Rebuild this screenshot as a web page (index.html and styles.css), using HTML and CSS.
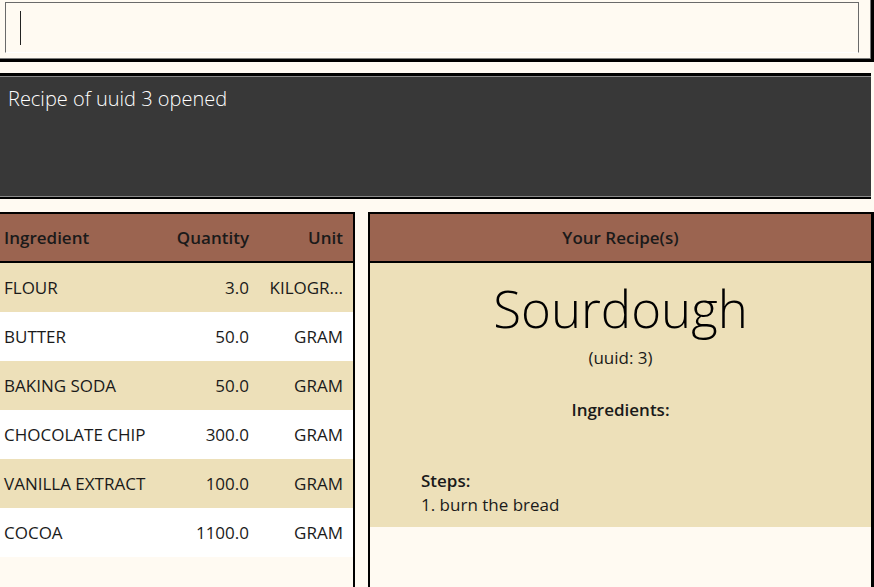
FILE: index.html
```html
<!DOCTYPE html>
<html>
<head>
<meta charset="utf-8">
<link rel="stylesheet" href="styles.css">
</head>
<body>
<div class="app">
  <div class="command-pane">
    <div class="command-field"><span class="caret"></span></div>
  </div>
  <div class="result-pane">
    <div class="result-text">Recipe of uuid 3 opened</div>
  </div>
  <div class="main">
    <div class="ingredient-panel">
      <div class="table-head row">
        <div class="c-name">Ingredient</div>
        <div class="c-qty">Quantity</div>
        <div class="c-unit">Unit</div>
      </div>
      <div class="row odd"><div class="c-name">FLOUR</div><div class="c-qty">3.0</div><div class="c-unit">KILOGR...</div></div>
      <div class="row even"><div class="c-name">BUTTER</div><div class="c-qty">50.0</div><div class="c-unit">GRAM</div></div>
      <div class="row odd"><div class="c-name">BAKING SODA</div><div class="c-qty">50.0</div><div class="c-unit">GRAM</div></div>
      <div class="row even"><div class="c-name">CHOCOLATE CHIP</div><div class="c-qty">300.0</div><div class="c-unit">GRAM</div></div>
      <div class="row odd"><div class="c-name">VANILLA EXTRACT</div><div class="c-qty">100.0</div><div class="c-unit">GRAM</div></div>
      <div class="row even"><div class="c-name">COCOA</div><div class="c-qty">1100.0</div><div class="c-unit">GRAM</div></div>
    </div>
    <div class="recipe-panel">
      <div class="recipe-head">Your Recipe(s)</div>
      <div class="recipe-card">
        <div class="recipe-title">Sourdough</div>
        <div class="recipe-uuid">(uuid: 3)</div>
        <div class="recipe-section">Ingredients:</div>
        <div class="recipe-steps">
          <div class="steps-label">Steps:</div>
          <div class="step">1. burn the bread</div>
        </div>
      </div>
    </div>
  </div>
</div>
</body>
</html>
```

FILE: styles.css
```css
html, body {
  margin: 0;
  padding: 0;
}
body {
  background: #fffaf2;
  font-family: "Open Sans", "Noto Sans", sans-serif;
  color: #1a1a1a;
  width: 874px;
  height: 587px;
  overflow: hidden;
}
.app {
  display: flex;
  flex-direction: column;
  height: 587px;
}
.command-pane {
  box-sizing: border-box;
  height: 62px;
  width: 874px;
  border-right: 3px solid #000;
  border-bottom: 3px solid #000;
  box-shadow: inset -1px -1px 0 #7a7a7a;
  padding: 2px 12px 0 5px;
}
.command-field {
  box-sizing: border-box;
  height: 51px;
  border: 1px solid #6a6a6a;
  border-bottom-color: #ffffff;
  display: flex;
  align-items: flex-start;
  padding: 8px 0 0 14px;
}
.caret {
  width: 1px;
  height: 34px;
  background: #222;
}
.result-pane {
  box-sizing: border-box;
  margin-top: 11px;
  width: 871px;
  height: 126px;
  background: #383838;
  border-top: 3px solid #000;
  border-bottom: 2px solid #000;
  box-shadow: inset 0 1px 0 #8a8a8a, inset 0 -1px 0 #8a8a8a;
  padding: 9px 8px;
}
.result-text {
  color: #ffffff;
  font-size: 20px;
  font-weight: 300;
  line-height: 27px;
}
.main {
  flex: 1;
  display: flex;
  margin-top: 13px;
  min-height: 0;
}
.ingredient-panel {
  box-sizing: border-box;
  width: 355px;
  border-top: 2px solid #000;
  border-right: 2px solid #000;
}
.row {
  display: grid;
  grid-template-columns: 1fr 90px 94px;
  padding: 0 10px 0 4px;
  height: 49px;
  align-items: center;
  font-size: 17px;
}
.c-qty, .c-unit {
  text-align: right;
  white-space: nowrap;
}
.table-head {
  box-sizing: border-box;
  background: #9b6450;
  font-weight: 600;
  height: 49px;
  border-bottom: 2px solid #000;
}
.odd { background: #ede0b9; }
.even { background: #ffffff; }
.recipe-panel {
  box-sizing: border-box;
  margin-left: 13px;
  width: 506px;
  border-top: 2px solid #000;
  border-left: 2px solid #000;
  border-right: 3px solid #000;
}
.recipe-head {
  box-sizing: border-box;
  height: 49px;
  background: #9b6450;
  border-bottom: 2px solid #000;
  font-weight: 600;
  font-size: 17px;
  display: flex;
  align-items: center;
  justify-content: center;
}
.recipe-card {
  background: #ede0b9;
  height: 264px;
  box-sizing: border-box;
  padding-top: 15px;
  display: flex;
  flex-direction: column;
  align-items: center;
}
.recipe-title {
  font-size: 51px;
  font-weight: 300;
  line-height: 60px;
  color: #000;
}
.recipe-uuid {
  font-size: 17px;
  line-height: 24px;
  margin-top: 8px;
}
.recipe-section {
  font-size: 17px;
  font-weight: 600;
  line-height: 24px;
  margin-top: 28px;
}
.recipe-steps {
  align-self: stretch;
  padding-left: 51px;
  margin-top: 47px;
  font-size: 17px;
  line-height: 24px;
}
.steps-label {
  font-weight: 600;
}
```
